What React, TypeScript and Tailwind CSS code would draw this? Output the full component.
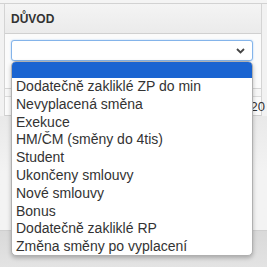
import React from "react";

const items = [
  "Dodatečně zakliklé ZP do min",
  "Nevyplacená směna",
  "Exekuce",
  "HM/ČM (směny do 4tis)",
  "Student",
  "Ukončeny smlouvy",
  "Nové smlouvy",
  "Bonus",
  "Dodatečně zakliklé RP",
  "Změna směny po vyplacení",
];

export default function App() {
  return (
    <div
      className="relative w-[267px] h-[267px] overflow-hidden bg-[#f2f2f2] flex flex-col"
      style={{ fontFamily: '"Liberation Sans", Arial, sans-serif' }}
    >
      <div className="h-[4px] bg-[#f4f4f4] border-b border-[#d2d2d2] shrink-0" />
      <div className="flex flex-col ml-[4px] w-[258px] border-l border-r border-[#d4d4d4] shrink-0">
        <div className="h-[30px] border-b border-[#d0d0d0] bg-gradient-to-b from-[#f4f4f4] to-[#ebebeb] flex items-center pl-[6px] pt-[1px]">
          <span className="text-[12px] font-bold text-[#333] tracking-[0px]">DŮVOD</span>
        </div>
        <div className="h-[55px] bg-[#fbfbfb] border-b border-[#d6d6d6] pt-[6px] pl-[6px]">
          <div className="w-[242px] h-[21px] rounded-[3px] border border-[#84b4ea] bg-white shadow-[0_0_2px_#a8cdf5] flex items-center justify-end pr-[7px]">
            <svg width="9" height="6" viewBox="0 0 9 6">
              <path d="M1 1 L4.5 4.5 L8 1" fill="none" stroke="#444" strokeWidth="1.8" />
            </svg>
          </div>
        </div>
        <div className="h-[8px] bg-[#f7f7f7] border-b border-[#dcdcdc]" />
        <div className="h-[19px] bg-[#fbfbfb] border-b border-[#d0d0d0] flex items-center justify-end pr-[-2px]">
          <span className="text-[13px] text-[#333] leading-none mr-[-4px]">20</span>
        </div>
      </div>
      <div className="flex-1 bg-gradient-to-b from-[#e9e9e9] via-[#f3f3f3] to-[#f3f3f3]" />
      <div className="h-[37px] bg-gradient-to-b from-[#d9d9d9] to-[#e3e3e3] border-t border-[#cfcfcf] shrink-0" />

      <div className="absolute left-[11px] top-[61px] w-[242px] h-[195px] bg-white rounded-[5px] border border-[#b0b0b0] shadow-[0_2px_4px_rgba(0,0,0,0.25)] overflow-hidden">
        <div className="h-[16px] bg-[#1a64d1]" />
        <div className="flex flex-col">
          {items.map((t) => (
            <div key={t} className="h-[17.8px] leading-[17.8px] pl-[4px] text-[14px] text-[#333] whitespace-nowrap">
              {t}
            </div>
          ))}
        </div>
      </div>
    </div>
  );
}
